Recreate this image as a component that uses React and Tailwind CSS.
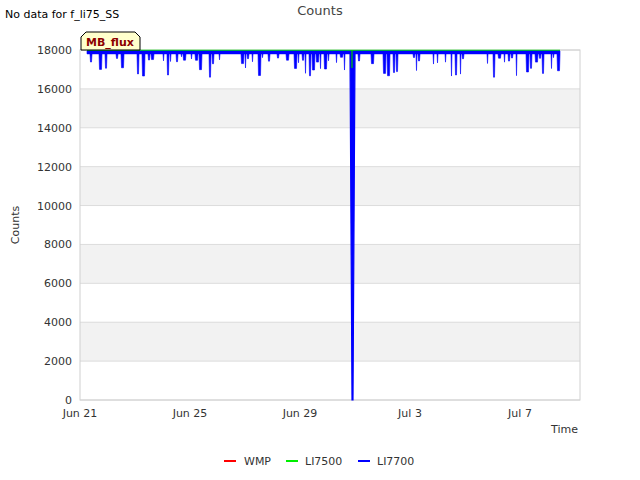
import React from "react";

function rng(seed){let s=seed;return()=>{s=(s*1103515245+12345)%2147483648;return s/2147483648;};}

export default function App(){
  const X0=80,X1=580,Y0=50,Y1=400;
  const y=v=>Y1-(v/18000)*350;
  const r=rng(7);
  const spikes=[];
  for(let x=88;x<=558;){
    if(r()<0.35){
      const w=1+Math.floor(r()*3);
      const depth=r()<0.35?700+r()*500:150+r()*400;
      spikes.push([x,w,17800-depth]);
      x+=w+1;
    } else x+=2;
  }
  const base=y(17800);
  const d=`M87,${y(17950)} L560,${y(17950)} L560,${base} `+[...spikes].reverse().map(([x,w,v])=>`L${x+w},${base} L${x+w-0.5},${y(v)} L${x+0.5},${y(v)} L${x},${base}`).join(" ")+` L87,${base} Z`;
  const bands=[[14000,16000],[10000,12000],[6000,8000],[2000,4000]];
  const ticks=[0,2000,4000,6000,8000,10000,12000,14000,16000,18000];
  const xt=[["Jun 21",80],["Jun 25",190],["Jun 29",300],["Jul 3",410],["Jul 7",520]];
  return(
    <div className="relative w-[640px] h-[480px] bg-white" style={{fontFamily:"'DejaVu Sans',sans-serif"}}>
      <svg width="640" height="480" className="absolute left-0 top-0" fontFamily="DejaVu Sans, sans-serif">
        {bands.map(([a,b])=><rect key={a} x={X0} y={y(b)} width={X1-X0} height={y(a)-y(b)} fill="#f2f2f2"/>)}
        {ticks.map(t=><line key={t} x1={X0} x2={X1} y1={y(t)} y2={y(t)} stroke="#dcdcdc"/>)}
        <rect x={X0} y={Y0} width={X1-X0} height={Y1-Y0} fill="none" stroke="#d0d0d0"/>
        {ticks.map(t=><text key={t} x="72" y={y(t)+4} fontSize="11" textAnchor="end" fill="#333">{t}</text>)}
        {xt.map(([l,x])=><text key={l} x={x} y="417" fontSize="11" textAnchor="middle" fill="#333">{l}</text>)}
        <text x="578" y="433" fontSize="11" textAnchor="end" fill="#333">Time</text>
        <text x="19" y="225" fontSize="11" textAnchor="middle" fill="#333" transform="rotate(-90 19 225)">Counts</text>
        <text x="320" y="15" fontSize="13" textAnchor="middle" fill="#444">Counts</text>
        <text x="5" y="18" fontSize="11" fill="#000">No data for f_li75_SS</text>
        <line x1="87" x2="560" y1="50.5" y2="50.5" stroke="#00ee00" strokeWidth="1.5"/>
        <path d={d} fill="#0000ff" stroke="#0000ff" strokeWidth="0.6"/>
        <path d={`M350,${base} L352,${y(0)} L353,${y(0)} L355,${base}`} fill="#0000ff" stroke="#0000ff" strokeWidth="1.2"/>
        <line x1="352" x2="352" y1="50" y2="68" stroke="#00cc00" strokeWidth="1.2"/>
        <path d="M81,50 L81,37 L86,32 L135,32 L140,37 L140,50 Z" fill="#ffffcc" stroke="#000" strokeWidth="1"/>
        <text x="110" y="46" fontSize="11" fontWeight="bold" textAnchor="middle" fill="#8b0000">MB_flux</text>
        <line x1="224" x2="236" y1="461" y2="461" stroke="#ff0000" strokeWidth="2"/>
        <text x="244" y="465" fontSize="11" fill="#333">WMP</text>
        <line x1="286" x2="298" y1="461" y2="461" stroke="#00ee00" strokeWidth="2"/>
        <text x="305" y="465" fontSize="11" fill="#333">LI7500</text>
        <line x1="358" x2="370" y1="461" y2="461" stroke="#0000ff" strokeWidth="2"/>
        <text x="377" y="465" fontSize="11" fill="#333">LI7700</text>
      </svg>
    </div>
  );
}
